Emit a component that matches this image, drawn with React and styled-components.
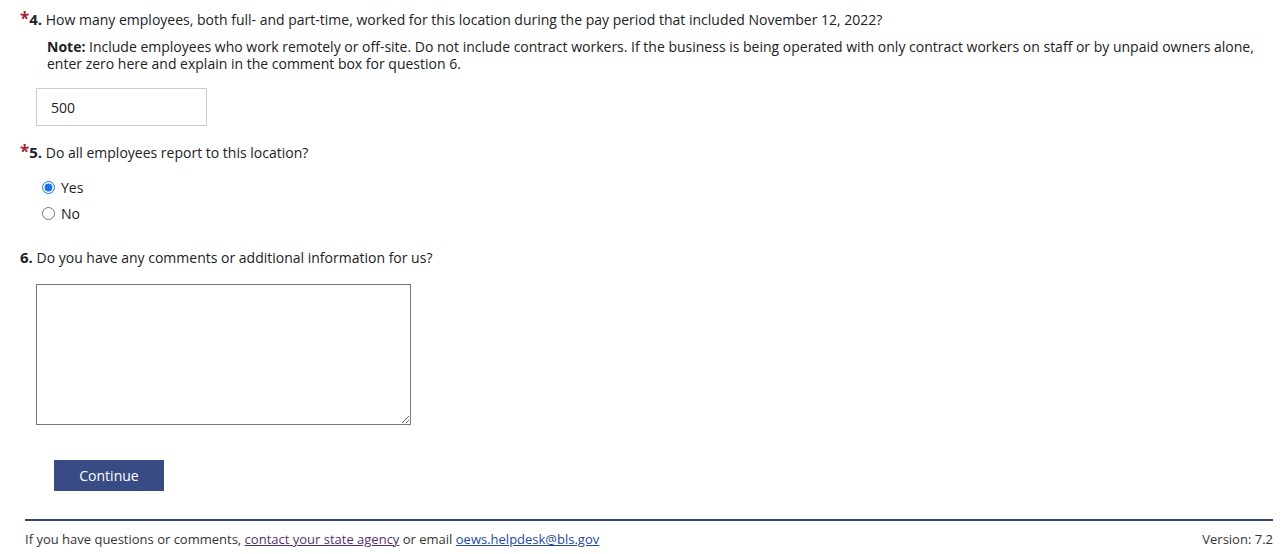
import React from "react";
import styled, { createGlobalStyle } from "styled-components";

const Global = createGlobalStyle`
  body {
    margin: 0;
    background: #fff;
    font-family: "Open Sans", "Liberation Sans", Arial, sans-serif;
    font-size: 14px;
    color: #222;
  }
`;

const Page = styled.div`
  padding: 10px 9px 0 20px;
`;

const Question = styled.div`
  line-height: 17px;
`;

const Star = styled.span`
  color: #a4243b;
  font-weight: bold;
  font-size: 17px;
`;

const Num = styled.b`
  font-size: 15px;
`;

const Note = styled.div`
  margin: 10px 0 16px 27px;
  line-height: 17px;
`;

const TextInput = styled.input`
  display: block;
  box-sizing: border-box;
  width: 171px;
  height: 38px;
  margin: 0 0 17px 16px;
  padding: 0 14px;
  border: 1px solid #ccc;
  font: inherit;
  color: #222;
  outline: none;
`;

const Options = styled.div`
  display: flex;
  flex-direction: column;
  gap: 9px;
  margin: 18px 0 27px 22px;
`;

const Option = styled.label`
  display: flex;
  align-items: center;
  gap: 6px;
  height: 17px;
  line-height: 17px;
`;

const Radio = styled.input`
  margin: 0;
  width: 13px;
  height: 13px;
  accent-color: #1a73e8;
`;

const Comment = styled.textarea`
  display: block;
  box-sizing: border-box;
  width: 375px;
  height: 141px;
  margin: 18px 0 35px 16px;
  border: 1px solid #767676;
  resize: both;
  font: inherit;
`;

const Button = styled.button`
  display: block;
  width: 110px;
  height: 31px;
  margin: 0 0 28px 34px;
  border: none;
  background: #384b85;
  color: #fff;
  font-family: inherit;
  font-size: 14px;
`;

const Footer = styled.footer`
  margin-left: 5px;
  border-top: 2px solid #34427a;
  display: flex;
  justify-content: space-between;
  padding-top: 10px;
  font-size: 13px;
  line-height: 17px;
  color: #333;
`;

const Link = styled.a`
  color: ${(p) => (p.$visited ? "#55306a" : "#1f47a0")};
  text-decoration: underline;
`;

export default function App() {
  return (
    <Page>
      <Global />
      <Question>
        <Star>*</Star>
        <Num>4.</Num> How many employees, both full- and part-time, worked for this location
        during the pay period that included November 12, 2022?
      </Question>
      <Note>
        <b>Note:</b> Include employees who work remotely or off-site. Do not include contract
        workers. If the business is being operated with only contract workers on staff or by
        unpaid owners alone, enter zero here and explain in the comment box for question 6.
      </Note>
      <TextInput defaultValue="500" />
      <Question>
        <Star>*</Star>
        <Num>5.</Num> Do all employees report to this location?
      </Question>
      <Options>
        <Option>
          <Radio type="radio" name="q5" defaultChecked /> Yes
        </Option>
        <Option>
          <Radio type="radio" name="q5" /> No
        </Option>
      </Options>
      <Question>
        <Num>6.</Num> Do you have any comments or additional information for us?
      </Question>
      <Comment />
      <Button>Continue</Button>
      <Footer>
        <span>
          If you have questions or comments, <Link href="#" $visited>contact your state agency</Link> or
          email <Link href="#">oews.helpdesk@bls.gov</Link>
        </span>
        <span>Version: 7.2</span>
      </Footer>
    </Page>
  );
}
